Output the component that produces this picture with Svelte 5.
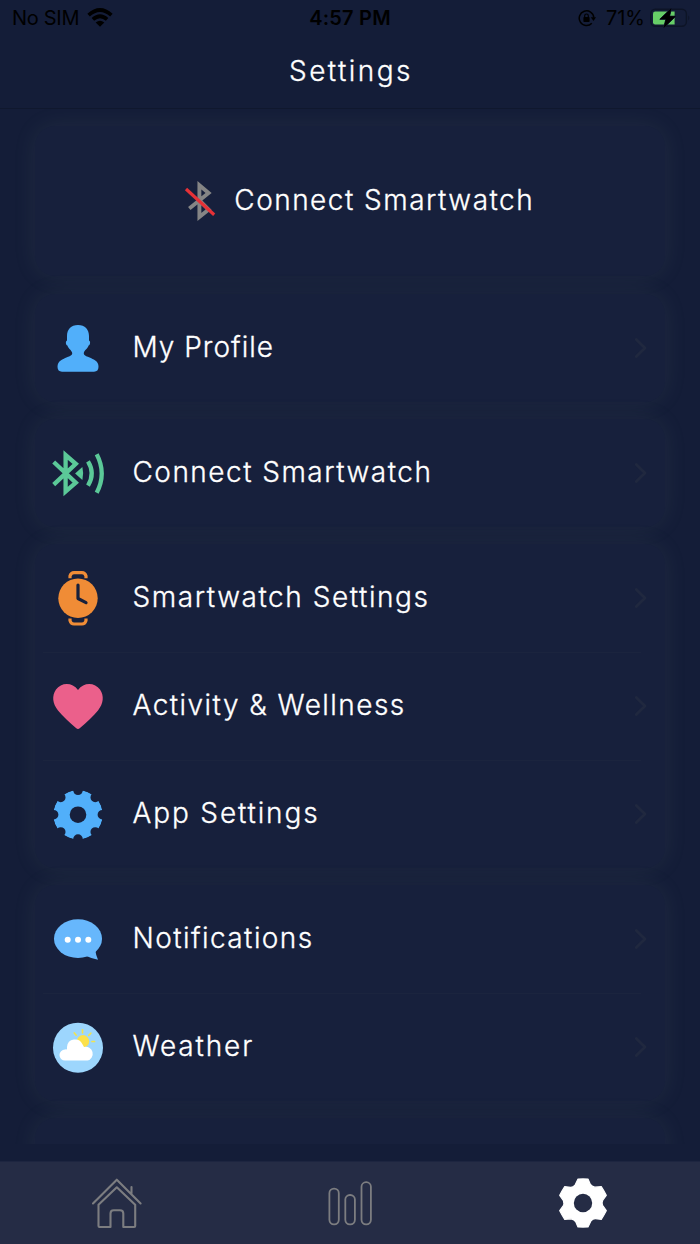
<script>
  const groups = [
    [{ label: 'My Profile', icon: 'profile', spacing: 1 }],
    [{ label: 'Connect Smartwatch', icon: 'bluetooth', spacing: 1.47 }],
    [
      { label: 'Smartwatch Settings', icon: 'watch', spacing: 1.55 },
      { label: 'Activity & Wellness', icon: 'heart', spacing: 1.45 },
      { label: 'App Settings', icon: 'gear', spacing: 1.85 }
    ],
    [
      { label: 'Notifications', icon: 'chat', spacing: 1.42 },
      { label: 'Weather', icon: 'weather', spacing: 1.85 }
    ]
  ];
  const eighths = [0, 45, 90, 135, 180, 225, 270, 315];

  // Six-tooth cog outline, one tooth plus one valley per step.
  function cog() {
    let d = '';
    for (let i = 0; i < 6; i++) {
      const a = (i * Math.PI) / 3;
      const p = (x, y) =>
        `${(x * Math.cos(a) - y * Math.sin(a)).toFixed(2)} ${(x * Math.sin(a) + y * Math.cos(a)).toFixed(2)}`;
      d += `${i ? 'L' : 'M'}${p(-5, -24)}Q${p(0, -24.2)} ${p(5, -24)}L${p(7.4, -18.6)}Q${p(8.6, -16.4)} ${p(11.8, -15.8)}`;
    }
    return d + 'Z';
  }
</script>

{#snippet icon(name)}
  <svg class="icon" viewBox="-28 -30 56 60" width="56" height="60">
    {#if name === 'profile'}
      <path fill="#51affa" d="M0-23C7-23 11-18.5 11-12V-7.4C12.8-6.6 12.2-2.8 10.6-2.4C9.5 1 6.2 2.4 5.8 5C5.6 7.2 8 8 11 9.3C16 11.5 20.5 13.2 20.5 18.8C20.5 22 19 23.7 16 23.7H-16C-19 23.7-20.5 22-20.5 18.8C-20.5 13.2-16 11.5-11 9.3C-8 8-5.6 7.2-5.8 5C-6.2 2.4-9.5 1-10.6-2.4C-12.2-2.8-12.8-6.6-11-7.4V-12C-11-18.5-7-23 0-23Z" />
    {:else if name === 'bluetooth'}
      <g fill="none" stroke="#5bc998" stroke-width="4.3">
        <path d="M-24.3-11L-2.2 9.6L-12.4 18.6V-18L-2.2-9.2L-24.3 11.6" />
        <path d="M10-11.6Q17.5.5 10 12.6" />
        <path d="M18.7-18.8Q28.8.5 18.7 19.8" />
      </g>
      <path fill="#5bc998" d="M-2.9.4L4.4-5.9Q6 .5 4.4 7Z" />
    {:else if name === 'watch'}
      <circle cy=".3" r="19.7" fill="#f08c36" />
      <path d="M0-13V.5L8 4.7" fill="none" stroke="#17203c" stroke-width="3.2" stroke-linecap="round" stroke-linejoin="round" />
      <path d="M-8-19.8V-22Q-7-25.4-4-25.4H4Q7-25.4 8-22V-19.8M-8 20.4V22.6Q-7 26-4 26H4Q7 26 8 22.6V20.4" fill="none" stroke="#f08c36" stroke-width="3.2" />
    {:else if name === 'heart'}
      <path fill="#eb608b" d="M0-16C6-24.5 17-23.5 22-16.5C26.4-10 25.5-2.5 20 4.4C15.5 10 8.5 16.3 2 22Q0 23.8-2 22C-8.5 16.3-15.5 10-20 4.4C-25.5-2.5-26.4-10-22-16.5C-17-23.5-6-24.5 0-16Z" />
    {:else if name === 'gear'}
      <mask id="gear-cut">
        <circle cy=".7" r="24.7" fill="#fff" />
        <circle cy=".7" r="8.3" fill="#000" />
        {#each eighths as a}
          <circle cy="-24.4" r="4.8" fill="#000" transform="translate(0 .7) rotate({a})" />
        {/each}
      </mask>
      <circle cy=".7" r="24.7" fill="#51affa" mask="url(#gear-cut)" />
    {:else if name === 'chat'}
      <ellipse cy="-.3" rx="24" ry="19.4" fill="#67b7fc" />
      <path fill="#67b7fc" d="M17.3 11.5Q18 16.5 20 20.8Q14 19.8 9 17.3Z" />
      <g fill="#fff"><circle cx="-10.3" cy=".7" r="3" /><circle cy=".7" r="3" /><circle cx="10.3" cy=".7" r="3" /></g>
    {:else}
      <circle cy=".7" r="25" fill="#9dd6fd" />
      <circle cx="5" cy="-5.7" r="6.2" fill="#fce14b" />
      <path d="M4.5-17.2V-14.2M10.8-11.6L12.8-13.8M14-5.5H16.5M-3.7-14L-1.8-11.8" stroke="#f2e34e" stroke-width="1.7" stroke-linecap="round" />
      <path fill="#fff" d="M-13 13.6A5.5 5.5 0 0 1-13 2.5Q-12 2.2-11 2.5V0A8.1 8.1 0 0 1 4.6-2.4Q5.7-.6 6 0A7 7 0 1 1 9.4 13.6Z" />
    {/if}
  </svg>
{/snippet}

<div class="screen">
  <header>
    <div class="status">
      <div class="carrier">
        <span class="sim">No SIM</span>
        <svg width="26" height="20" viewBox="0 0 26 20">
          <g fill="none" stroke="#000" stroke-width="3.7">
            <path d="M1.6 7.1Q13-3.2 24.4 7.1" />
            <path d="M5.9 11.4Q13 5 20.1 11.4" />
          </g>
          <path d="M8.7 14.5Q13 11 17.3 14.5L13 18.8Z" />
        </svg>
      </div>
      <span class="time">4:57 PM</span>
      <div class="power">
        <svg width="18" height="18" viewBox="0 0 18 18">
          <path d="M13.8 14.2A7.3 7.3 0 1 1 15.8 8.6" fill="none" stroke="#000" stroke-width="1.5" />
          <path d="M12.8 8.2H18L15.5 12Z" />
          <rect x="5.4" y="8" width="6.2" height="5" rx=".8" />
          <path d="M6.7 8.5V6.8a1.8 1.8 0 0 1 3.6 0V8.5" fill="none" stroke="#000" stroke-width="1.2" />
        </svg>
        <span class="percent">71%</span>
        <svg width="41" height="20" viewBox="0 0 41 20">
          <rect x=".8" y="1.3" width="35.6" height="17" rx="4.5" fill="none" stroke="#0d1426" stroke-width="1.4" />
          <path d="M38.3 7.2Q40.4 9.8 38.3 12.6Z" fill="#0d1426" />
          <path d="M5.2 3.6H24.6V16.4H5.2Q3 16.4 3 14.2V5.8Q3 3.6 5.2 3.6Z" fill="#67ce67" />
          <path d="M21.5 0L9.8 11.3H15.8L13.6 20L25.8 8.2H19.6Z" stroke="#141d38" stroke-width="1" />
          <path d="M21.5 0L9.8 11.3H15.8L13.6 20L25.8 8.2H19.6Z" />
        </svg>
      </div>
    </div>
    <h1>Settings</h1>
  </header>

  <main>
    <button class="card connect">
      <svg width="32" height="44" viewBox="184 179 32 44">
        <path d="M189.3 208.6L208.6 193L199.4 185.2V217L208.6 209.6L200 201" fill="none" stroke="#858585" stroke-width="3.9" />
        <path d="M186 189L214.2 214.8" stroke="#e63137" stroke-width="3.2" />
      </svg>
      <span>Connect Smartwatch</span>
    </button>
    {#each groups as rows}
      <section class="card">
        {#each rows as row}
          <div class="row">
            {@render icon(row.icon)}
            <span class="label" style="letter-spacing:{row.spacing}px">{row.label}</span>
            <svg class="chevron" width="14" height="22" viewBox="0 0 14 22">
              <path d="M2.3 2.5L11 11L2.3 19.5" fill="none" stroke="#20283f" stroke-width="2.8" stroke-linecap="round" stroke-linejoin="round" />
            </svg>
          </div>
        {/each}
      </section>
    {/each}
    <section class="card next"></section>
  </main>

  <nav>
    <svg width="54" height="54" viewBox="90 1176 54 54" fill="none" stroke="#7c7d80" stroke-width="2.1" stroke-linecap="round" stroke-linejoin="round">
      <path d="M93 1203.5L116.8 1179.7L140.6 1203.5M131.5 1187V1193.5" />
      <path d="M98.5 1204.8L116.8 1187.3L135.2 1204.8V1226Q135.2 1227 134.2 1227H123.3V1213.5Q123.3 1210.3 120 1210.3H113.7Q110.5 1210.3 110.5 1213.5V1227H99.5Q98.5 1227 98.5 1226Z" />
    </svg>
    <svg width="54" height="54" viewBox="323 1176 54 54" fill="none" stroke="#7c7d80" stroke-width="1.8">
      <rect x="329.4" y="1188.6" width="9.4" height="35.8" rx="4.6" />
      <rect x="345.3" y="1195" width="9.6" height="29.4" rx="4.6" />
      <rect x="361.5" y="1182.2" width="9.4" height="42.2" rx="4.6" />
    </svg>
    <svg width="54" height="54" viewBox="-27 -27 54 54">
      <path d={cog()} fill="#fff" stroke="#fff" stroke-width="1.2" stroke-linejoin="round" />
      <circle r="9.2" fill="#252c45" />
    </svg>
  </nav>
</div>

<style>
  :global(body) { margin: 0; background: #141d38; }
  .screen {
    width: 700px;
    height: 1244px;
    display: flex;
    flex-direction: column;
    background: #141d38;
    color: #fff;
    font-family: Inter, "Open Sans", sans-serif;
    overflow: hidden;
  }
  svg { display: block; flex: none; }
  header { height: 108px; border-bottom: 1px solid #10182e; box-sizing: content-box; }
  .status {
    height: 36px;
    display: grid;
    grid-template-columns: 1fr auto 1fr;
    align-items: center;
    padding: 0 9px 0 12px;
    color: #000;
    font-size: 20px;
    line-height: 36px;
  }
  .carrier, .power { display: flex; align-items: center; }
  .carrier { gap: 8px; letter-spacing: -0.3px; }
  .power { justify-content: flex-end; gap: 5px; }
  .percent { margin-left: 5px; }
  .time { font-weight: 600; margin-left: -3px; letter-spacing: 0.2px; }
  h1 {
    margin: 0;
    padding-left: 2px;
    font-size: 28px;
    font-weight: 300;
    -webkit-text-stroke: 0.3px #fff;
    line-height: 71px;
    text-align: center;
    letter-spacing: 2.45px;
  }
  main {
    height: 1018px;
    padding: 17px 35px 0;
    display: flex;
    flex-direction: column;
    gap: 17px;
    overflow: hidden;
  }
  .card {
    flex: none;
    border: 0;
    border-radius: 20px;
    background: #17203c;
    box-shadow: 0 0 24px 0 rgba(160, 180, 160, 0.085);
  }
  .connect {
    height: 150px;
    margin-bottom: 1px;
    padding: 0 0 0 18px;
    display: flex;
    align-items: center;
    justify-content: center;
    gap: 18.5px;
    color: #fff;
    font-family: inherit;
    font-size: 28px;
    font-weight: 300;
    -webkit-text-stroke: 0.3px #fff;
    letter-spacing: 1.47px;
  }
  .connect span { margin-top: -2px; }
  .row {
    height: 108px;
    display: flex;
    align-items: center;
    padding: 0 17px 0 15px;
    position: relative;
  }
  .row + .row::before {
    content: "";
    position: absolute;
    top: 0;
    left: 8px;
    right: 24px;
    height: 1px;
    background: #1b243e;
  }
  .label {
    flex: 1;
    margin: -2px 0 0 26.5px;
    font-size: 28px;
    font-weight: 300;
    -webkit-text-stroke: 0.3px #fff;
    white-space: nowrap;
  }
  .next { height: 108px; }
  nav {
    height: 83px;
    margin-top: auto;
    flex: none;
    box-sizing: border-box;
    display: grid;
    grid-template-columns: repeat(3, 1fr);
    place-items: center;
    background: #252c45;
    border-top: 1px solid #1d2540;
  }
</style>
